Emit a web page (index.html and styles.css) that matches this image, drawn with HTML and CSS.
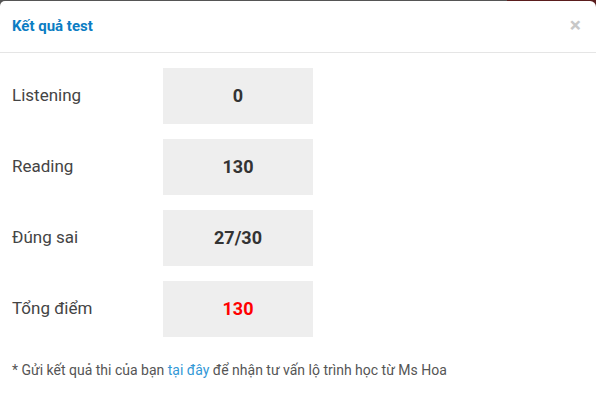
FILE: index.html
```html
<!DOCTYPE html>
<html lang="vi">
<head>
<meta charset="utf-8">
<link rel="stylesheet" href="styles.css">
</head>
<body>
<div class="backdrop">
  <div class="modal">
    <div class="modal-header">
      <h4 class="modal-title">Kết quả test</h4>
      <span class="close">×</span>
    </div>
    <div class="modal-body">
      <div class="row">
        <div class="label">Listening</div>
        <div class="score">0</div>
      </div>
      <div class="row">
        <div class="label">Reading</div>
        <div class="score">130</div>
      </div>
      <div class="row">
        <div class="label">Đúng sai</div>
        <div class="score">27/30</div>
      </div>
      <div class="row">
        <div class="label">Tổng điểm</div>
        <div class="score total">130</div>
      </div>
      <p class="note">* Gửi kết quả thi của bạn <a href="#">tại đây</a> để nhận tư vấn lộ trình học từ Ms Hoa</p>
    </div>
  </div>
</div>
</body>
</html>
```
FILE: styles.css
```css
html, body {
  margin: 0;
  padding: 0;
  background: #fff;
  font-family: Roboto, "Noto Sans", Arial, sans-serif;
}
.backdrop {
  width: 596px;
  height: 406px;
  background: linear-gradient(to right, #555 0, #555 507px, #5a1d1d 507px, #5a1d1d 100%);
  overflow: hidden;
}
.modal {
  margin-top: 1px;
  height: 405px;
  background: #fff;
  border-radius: 5px 6px 0 0;
}
.modal-header {
  display: flex;
  align-items: center;
  justify-content: space-between;
  height: 49px;
  padding: 0 15px 2px 12px;
  border-bottom: 1px solid #e5e5e5;
}
.modal-title {
  margin: 0;
  font-size: 15px;
  font-weight: 700;
  color: #0b7dc3;
}
.close {
  font-size: 21px;
  font-weight: 700;
  color: #c8c8c8;
  line-height: 1;
}
.modal-body {
  padding: 15px 12px 0;
  display: flex;
  flex-direction: column;
  gap: 15px;
}
.row {
  display: flex;
  align-items: center;
}
.label {
  width: 151px;
  padding-bottom: 2px;
  font-size: 17px;
  color: #444;
}
.score {
  box-sizing: border-box;
  width: 150px;
  height: 56px;
  padding-bottom: 2px;
  background: #eee;
  display: flex;
  align-items: center;
  justify-content: center;
  font-size: 18px;
  font-weight: 700;
  color: #333;
}
.score.total {
  color: #f00;
}
.note {
  margin: 10px 0 0;
  font-size: 14px;
  color: #555;
}
.note a {
  color: #3398d6;
  text-decoration: none;
}
```
